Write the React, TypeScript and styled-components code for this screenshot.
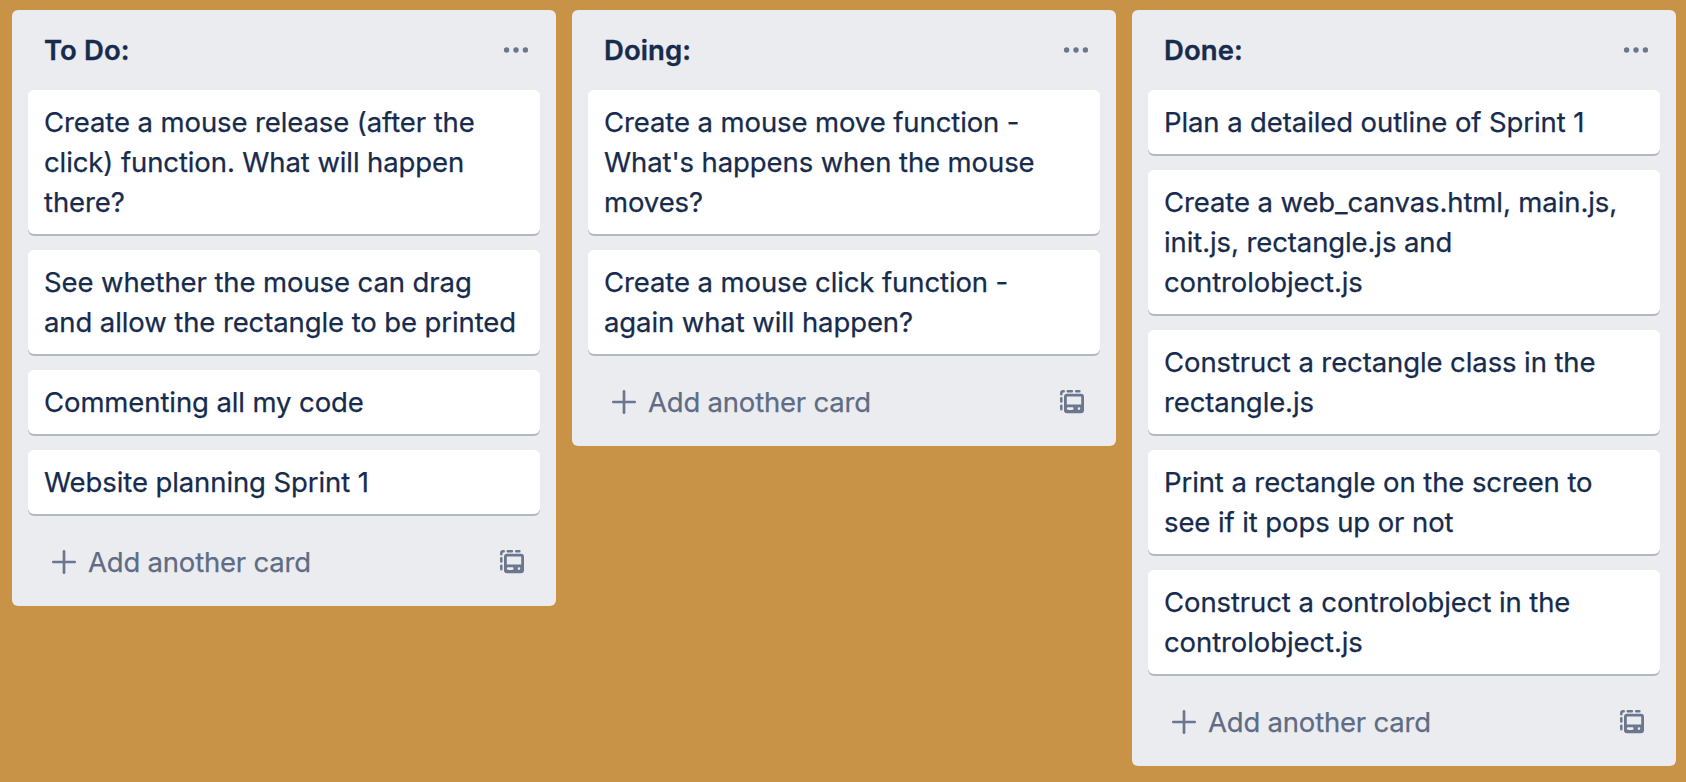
import React from "react";
import styled, { createGlobalStyle } from "styled-components";

const GlobalStyle = createGlobalStyle`
  *, *::before, *::after { box-sizing: border-box; }
  body {
    margin: 0;
    background: #c89247;
    color: #172b4d;
    font-family: Inter, "Liberation Sans", sans-serif;
    font-size: 27.5px;
    font-weight: 400;
    line-height: 40px;
    -webkit-text-stroke: 0.25px currentColor;
  }
`;

const Board = styled.main`
  display: flex;
  align-items: flex-start;
  gap: 16px;
  min-height: 782px;
  padding: 10px 10px 16px 12px;
`;

const List = styled.section`
  flex: 0 0 544px;
  padding: 0 16px 12px;
  border-radius: 6px;
  background: #ebecf0;
`;

const ListHeader = styled.header`
  display: flex;
  align-items: center;
  justify-content: space-between;
  height: 80px;
  padding: 0 10px 0 16px;
`;

const ListTitle = styled.h2`
  margin: 0;
  font-size: 27.5px;
  font-weight: 600;
  letter-spacing: 0.1px;
  -webkit-text-stroke: 0.35px currentColor;
`;

const IconButton = styled.button`
  display: flex;
  padding: 0;
  border: 0;
  background: none;
  color: #6b778c;
`;

const Cards = styled.ul`
  display: flex;
  flex-direction: column;
  gap: 16px;
  margin: 0;
  padding: 0;
  list-style: none;
`;

const Card = styled.li`
  padding: 12px 16px;
  border-radius: 6px;
  background: #fff;
  box-shadow: 0 2px 0 #b2b9c5;
  letter-spacing: -0.1px;
  white-space: pre;
`;

const ListFooter = styled.footer`
  display: flex;
  align-items: center;
  justify-content: space-between;
  height: 64px;
  margin-top: 16px;
  padding: 0 14px 0 22px;
`;

const AddCardButton = styled.button`
  display: flex;
  align-items: center;
  gap: 10px;
  padding: 0;
  border: 0;
  background: none;
  color: #5e6c84;
  font: inherit;
  letter-spacing: -0.2px;
`;

const MoreIcon = () => (
  <svg width="28" height="28" viewBox="0 0 28 28" fill="currentColor">
    <circle cx="4.6" cy="14" r="2.7" />
    <circle cx="14" cy="14" r="2.7" />
    <circle cx="23.4" cy="14" r="2.7" />
  </svg>
);

const PlusIcon = () => (
  <svg width="28" height="28" viewBox="0 0 28 28" fill="none" stroke="#6b778c" strokeWidth="2.7" strokeLinecap="round">
    <path d="M14 3.3v21.4M3.3 14h21.4" />
  </svg>
);

const TemplateIcon = () => (
  <svg width="28" height="28" viewBox="0 0 28 28">
    <path
      d="M3.3 6.3V5.3a2 2 0 0 1 2-2h.4M9.7 3.3h4.2M18.2 3.3h3.2M3.3 10.2v3.2M3.3 17.7v3.6"
      fill="none"
      stroke="#6b778c"
      strokeWidth="2.5"
      strokeLinecap="round"
    />
    <path
      fill="#6b778c"
      fillRule="evenodd"
      d="M9 5.8h14a3 3 0 0 1 3 3v13.4a3 3 0 0 1-3 3H9a3 3 0 0 1-3-3V8.8a3 3 0 0 1 3-3ZM9.3 8.5h13.4a.5.5 0 0 1 .5.5v7.5H8.8V9a.5.5 0 0 1 .5-.5ZM10.1 19.3h4.2a1.3 1.3 0 0 1 0 2.6h-4.2a1.3 1.3 0 0 1 0-2.6ZM21 19.3a1.3 1.3 0 1 1 0 2.6a1.3 1.3 0 0 1 0-2.6Z"
    />
  </svg>
);

const lists = [
  {
    title: "To Do:",
    cards: [
      "Create a mouse release (after the\nclick) function. What will happen\nthere?",
      "See whether the mouse can drag\nand allow the rectangle to be printed",
      "Commenting all my code",
      "Website planning Sprint 1",
    ],
  },
  {
    title: "Doing:",
    cards: [
      "Create a mouse move function -\nWhat's happens when the mouse\nmoves?",
      "Create a mouse click function -\nagain what will happen?",
    ],
  },
  {
    title: "Done:",
    cards: [
      "Plan a detailed outline of Sprint 1",
      "Create a web_canvas.html, main.js,\ninit.js, rectangle.js and\ncontrolobject.js",
      "Construct a rectangle class in the\nrectangle.js",
      "Print a rectangle on the screen to\nsee if it pops up or not",
      "Construct a controlobject in the\ncontrolobject.js",
    ],
  },
];

export default function App() {
  return (
    <>
      <GlobalStyle />
      <Board>
        {lists.map((list) => (
          <List key={list.title}>
            <ListHeader>
              <ListTitle>{list.title}</ListTitle>
              <IconButton aria-label="List actions">
                <MoreIcon />
              </IconButton>
            </ListHeader>
            <Cards>
              {list.cards.map((text) => (
                <Card key={text}>{text}</Card>
              ))}
            </Cards>
            <ListFooter>
              <AddCardButton>
                <PlusIcon />
                Add another card
              </AddCardButton>
              <IconButton aria-label="Create from template">
                <TemplateIcon />
              </IconButton>
            </ListFooter>
          </List>
        ))}
      </Board>
    </>
  );
}
